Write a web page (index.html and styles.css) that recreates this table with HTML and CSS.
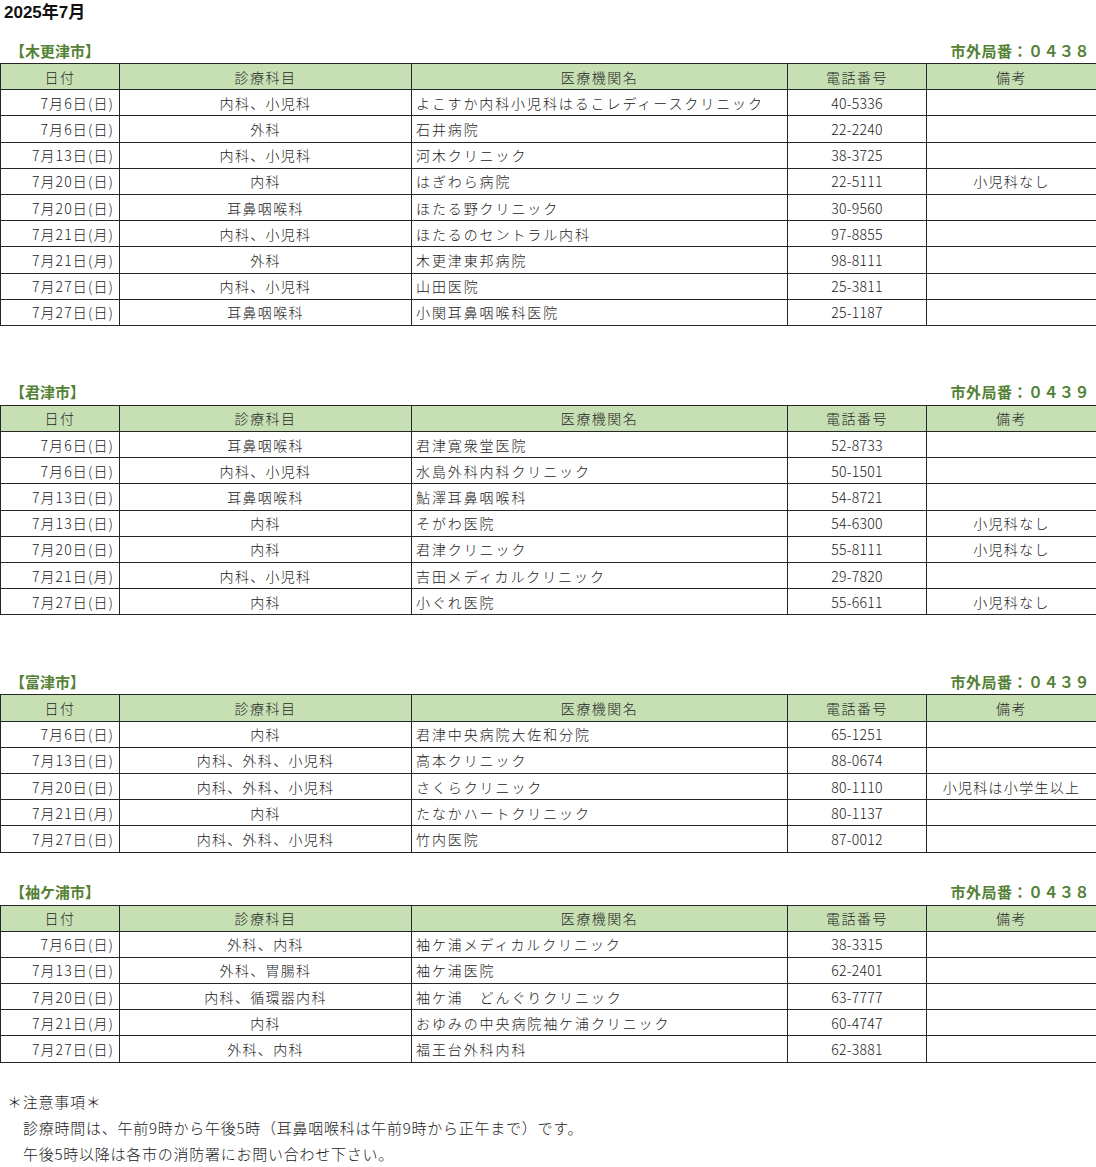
FILE: index.html
```html
<!DOCTYPE html>
<html lang="ja">
<head>
<meta charset="utf-8">
<title>2025年7月 休日当番医</title>
<link rel="stylesheet" href="styles.css">
</head>
<body>
<h1 class="title">2025年7月</h1>

<section class="area first">
  <div class="area-head"><span class="city">【木更津市】</span><span class="code">市外局番：０４３８</span></div>
  <table class="sched">
    <colgroup><col class="c1"><col class="c2"><col class="c3"><col class="c4"><col class="c5"></colgroup>
    <thead><tr><th>日付</th><th>診療科目</th><th>医療機関名</th><th>電話番号</th><th>備考</th></tr></thead>
    <tbody>
      <tr><td class="date">7月6日(日)</td><td class="ctr">内科、小児科</td><td class="name">よこすか内科小児科はるこレディースクリニック</td><td class="num">40-5336</td><td class="ctr"></td></tr>
      <tr><td class="date">7月6日(日)</td><td class="ctr">外科</td><td class="name">石井病院</td><td class="num">22-2240</td><td class="ctr"></td></tr>
      <tr><td class="date">7月13日(日)</td><td class="ctr">内科、小児科</td><td class="name">河木クリニック</td><td class="num">38-3725</td><td class="ctr"></td></tr>
      <tr><td class="date">7月20日(日)</td><td class="ctr">内科</td><td class="name">はぎわら病院</td><td class="num">22-5111</td><td class="ctr">小児科なし</td></tr>
      <tr><td class="date">7月20日(日)</td><td class="ctr">耳鼻咽喉科</td><td class="name">ほたる野クリニック</td><td class="num">30-9560</td><td class="ctr"></td></tr>
      <tr><td class="date">7月21日(月)</td><td class="ctr">内科、小児科</td><td class="name">ほたるのセントラル内科</td><td class="num">97-8855</td><td class="ctr"></td></tr>
      <tr><td class="date">7月21日(月)</td><td class="ctr">外科</td><td class="name">木更津東邦病院</td><td class="num">98-8111</td><td class="ctr"></td></tr>
      <tr><td class="date">7月27日(日)</td><td class="ctr">内科、小児科</td><td class="name">山田医院</td><td class="num">25-3811</td><td class="ctr"></td></tr>
      <tr><td class="date">7月27日(日)</td><td class="ctr">耳鼻咽喉科</td><td class="name">小関耳鼻咽喉科医院</td><td class="num">25-1187</td><td class="ctr"></td></tr>
    </tbody>
  </table>
</section>

<section class="area wide">
  <div class="area-head"><span class="city">【君津市】</span><span class="code">市外局番：０４３９</span></div>
  <table class="sched">
    <colgroup><col class="c1"><col class="c2"><col class="c3"><col class="c4"><col class="c5"></colgroup>
    <thead><tr><th>日付</th><th>診療科目</th><th>医療機関名</th><th>電話番号</th><th>備考</th></tr></thead>
    <tbody>
      <tr><td class="date">7月6日(日)</td><td class="ctr">耳鼻咽喉科</td><td class="name">君津寛衆堂医院</td><td class="num">52-8733</td><td class="ctr"></td></tr>
      <tr><td class="date">7月6日(日)</td><td class="ctr">内科、小児科</td><td class="name">水島外科内科クリニック</td><td class="num">50-1501</td><td class="ctr"></td></tr>
      <tr><td class="date">7月13日(日)</td><td class="ctr">耳鼻咽喉科</td><td class="name">鮎澤耳鼻咽喉科</td><td class="num">54-8721</td><td class="ctr"></td></tr>
      <tr><td class="date">7月13日(日)</td><td class="ctr">内科</td><td class="name">そがわ医院</td><td class="num">54-6300</td><td class="ctr">小児科なし</td></tr>
      <tr><td class="date">7月20日(日)</td><td class="ctr">内科</td><td class="name">君津クリニック</td><td class="num">55-8111</td><td class="ctr">小児科なし</td></tr>
      <tr><td class="date">7月21日(月)</td><td class="ctr">内科、小児科</td><td class="name">吉田メディカルクリニック</td><td class="num">29-7820</td><td class="ctr"></td></tr>
      <tr><td class="date">7月27日(日)</td><td class="ctr">内科</td><td class="name">小ぐれ医院</td><td class="num">55-6611</td><td class="ctr">小児科なし</td></tr>
    </tbody>
  </table>
</section>

<section class="area wide">
  <div class="area-head"><span class="city">【富津市】</span><span class="code">市外局番：０４３９</span></div>
  <table class="sched">
    <colgroup><col class="c1"><col class="c2"><col class="c3"><col class="c4"><col class="c5"></colgroup>
    <thead><tr><th>日付</th><th>診療科目</th><th>医療機関名</th><th>電話番号</th><th>備考</th></tr></thead>
    <tbody>
      <tr><td class="date">7月6日(日)</td><td class="ctr">内科</td><td class="name">君津中央病院大佐和分院</td><td class="num">65-1251</td><td class="ctr"></td></tr>
      <tr><td class="date">7月13日(日)</td><td class="ctr">内科、外科、小児科</td><td class="name">高本クリニック</td><td class="num">88-0674</td><td class="ctr"></td></tr>
      <tr><td class="date">7月20日(日)</td><td class="ctr">内科、外科、小児科</td><td class="name">さくらクリニック</td><td class="num">80-1110</td><td class="ctr">小児科は小学生以上</td></tr>
      <tr><td class="date">7月21日(月)</td><td class="ctr">内科</td><td class="name">たなかハートクリニック</td><td class="num">80-1137</td><td class="ctr"></td></tr>
      <tr><td class="date">7月27日(日)</td><td class="ctr">内科、外科、小児科</td><td class="name">竹内医院</td><td class="num">87-0012</td><td class="ctr"></td></tr>
    </tbody>
  </table>
</section>

<section class="area narrow">
  <div class="area-head"><span class="city">【袖ケ浦市】</span><span class="code">市外局番：０４３８</span></div>
  <table class="sched">
    <colgroup><col class="c1"><col class="c2"><col class="c3"><col class="c4"><col class="c5"></colgroup>
    <thead><tr><th>日付</th><th>診療科目</th><th>医療機関名</th><th>電話番号</th><th>備考</th></tr></thead>
    <tbody>
      <tr><td class="date">7月6日(日)</td><td class="ctr">外科、内科</td><td class="name">袖ケ浦メディカルクリニック</td><td class="num">38-3315</td><td class="ctr"></td></tr>
      <tr><td class="date">7月13日(日)</td><td class="ctr">外科、胃腸科</td><td class="name">袖ケ浦医院</td><td class="num">62-2401</td><td class="ctr"></td></tr>
      <tr><td class="date">7月20日(日)</td><td class="ctr">内科、循環器内科</td><td class="name">袖ケ浦　どんぐりクリニック</td><td class="num">63-7777</td><td class="ctr"></td></tr>
      <tr><td class="date">7月21日(月)</td><td class="ctr">内科</td><td class="name">おゆみの中央病院袖ケ浦クリニック</td><td class="num">60-4747</td><td class="ctr"></td></tr>
      <tr><td class="date">7月27日(日)</td><td class="ctr">外科、内科</td><td class="name">福王台外科内科</td><td class="num">62-3881</td><td class="ctr"></td></tr>
    </tbody>
  </table>
</section>

<div class="notes">
  <p class="notes-title">＊注意事項＊</p>
  <p class="note">診療時間は、午前9時から午後5時（耳鼻咽喉科は午前9時から正午まで）です。</p>
  <p class="note">午後5時以降は各市の消防署にお問い合わせ下さい。</p>
</div>
</body>
</html>
```

FILE: styles.css
```css
html, body {
  margin: 0;
  padding: 0;
  background: #ffffff;
}
body {
  font-family: "Noto Sans CJK JP", "Noto Sans", sans-serif;
  font-weight: 300;
  color: #1a1a1a;
  font-size: 14px;
  width: 1096px;
}
.title {
  margin: 0;
  padding-left: 4px;
  height: 26px;
  line-height: 26px;
  font-family: "Liberation Sans", "Noto Sans CJK JP", sans-serif;
  font-size: 17px;
  font-weight: 700;
  color: #111111;
}
.area.first { margin-top: 11px; }
.area.wide { margin-top: 53px; }
.area.narrow { margin-top: 26px; }
.area-head {
  display: flex;
  justify-content: space-between;
  align-items: center;
  height: 26px;
  padding: 0 6px 0 10px;
  color: #548235;
  font-weight: 700;
  font-size: 15px;
}
.code { letter-spacing: 0.5px; }
.sched {
  border-collapse: collapse;
  table-layout: fixed;
  width: 1096px;
}
.sched .c1 { width: 119px; }
.sched .c2 { width: 292px; }
.sched .c3 { width: 376px; }
.sched .c4 { width: 139px; }
.sched .c5 { width: 170px; }
.sched th, .sched td {
  border: 1px solid #262626;
  padding: 0;
  height: 25.2px;
  font-size: 14px;
  font-weight: 300;
  line-height: 20px;
  white-space: nowrap;
  overflow: hidden;
  letter-spacing: 1.3px;
}
.sched th {
  background: #c6e0b4;
  text-align: center;
  color: #262626;
  letter-spacing: 1.5px;
}
.sched td.date {
  text-align: right;
  padding-right: 5px;
  letter-spacing: 1.1px;
}
.sched td.ctr { text-align: center; }
.sched td.num {
  text-align: center;
  letter-spacing: 0.3px;
}
.sched td.name {
  text-align: left;
  padding-left: 4px;
  letter-spacing: 1.9px;
}
.notes {
  margin-top: 26px;
  font-size: 15px;
  letter-spacing: 0.75px;
}
.notes p {
  margin: 0;
  height: 26px;
  line-height: 26px;
}
.notes-title { padding-left: 7px; }
.note { padding-left: 23px; }
```
